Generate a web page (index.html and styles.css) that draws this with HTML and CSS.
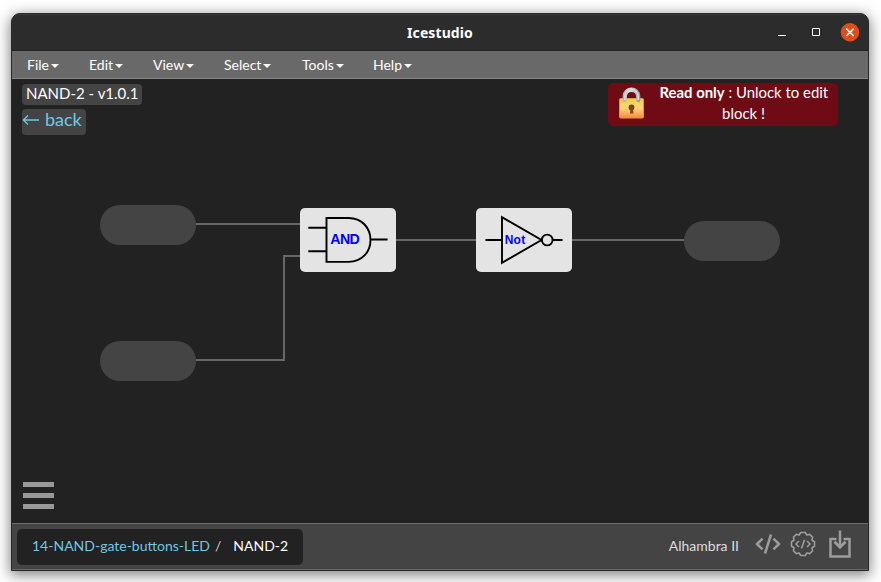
FILE: index.html
```html
<!DOCTYPE html>
<html lang="en">
<head>
<meta charset="utf-8">
<title>Icestudio</title>
<link rel="stylesheet" href="styles.css">
</head>
<body>
<div class="window">
  <header class="titlebar">
    <h1 class="title">Icestudio</h1>
    <div class="controls">
      <svg width="8" height="20" viewBox="0 0 8 20"><path d="M0 12.5h8" stroke="#fff" fill="none"/></svg>
      <svg width="8" height="20" viewBox="0 0 8 20"><path d="M.5 6.5h7v7h-7z" stroke="#fff" fill="none"/></svg>
      <svg width="20" height="20" viewBox="0 0 20 20"><circle cx="10" cy="9.3" r="9.2" fill="#e04c1a"/><path d="M6.3 5.6l7.4 7.4M13.7 5.6l-7.4 7.4" stroke="#fff" stroke-width="1.5"/></svg>
    </div>
  </header>
  <nav class="menubar">
    <span class="menu file">File<i class="caret"></i></span>
    <span class="menu edit">Edit<i class="caret"></i></span>
    <span class="menu view">View<i class="caret"></i></span>
    <span class="menu select">Select<i class="caret"></i></span>
    <span class="menu tools">Tools<i class="caret"></i></span>
    <span class="menu help">Help<i class="caret"></i></span>
  </nav>
  <main class="canvas">
    <svg class="graph" width="856" height="444" viewBox="12 79 856 444">
      <g fill="none" stroke="#666" stroke-width="2">
        <path d="M196 224H300M196 360H284V256H300M396 240H476M572 240H684"/>
      </g>
      <g fill="#444">
        <rect x="100" y="205" width="96" height="40" rx="20"/>
        <rect x="100" y="341" width="96" height="40" rx="20"/>
        <rect x="684" y="221" width="96" height="40" rx="20"/>
      </g>
      <g fill="#e4e4e4">
        <rect x="300" y="208" width="96" height="64" rx="5"/>
        <rect x="476" y="208" width="96" height="64" rx="5"/>
      </g>
      <g fill="none" stroke="#000" stroke-width="1.9">
        <path d="M308.3 227.8H326.5M308.3 251.3H326.5M370.5 239.5H387.6M326.5 218H348.5C362 218 370.5 228 370.5 240S362 261.9 348.5 261.9H326.5Z"/>
        <path d="M485.4 240H502M502 217.2V262.8L541.5 240ZM553 240H562.6"/>
        <circle cx="547.2" cy="240" r="5.4"/>
      </g>
      <text class="gate" x="330.3" y="244.4" font-size="14.2" textLength="29.5">AND</text>
      <text class="gate" x="504.7" y="244" font-size="12" textLength="20.5">Not</text>
    </svg>
    <div class="block-info">
      <span class="version">NAND-2 - v1.0.1</span>
      <span class="back"><svg width="17" height="12" viewBox="0 0 17 12"><path d="M17 6H1.5M6 1.5L1.4 6L6 10.5" fill="none" stroke="#70c8e4" stroke-width="1.35"/></svg>back</span>
    </div>
    <div class="notice">
      <svg class="lock" width="28" height="34" viewBox="0 0 28 34">
        <defs>
          <linearGradient id="gold" x1="0" y1="0" x2="0" y2="1"><stop offset="0" stop-color="#f5cd46"/><stop offset=".5" stop-color="#ffd575"/><stop offset="1" stop-color="#fa8746"/></linearGradient>
          <linearGradient id="steel"><stop offset="0" stop-color="#b2b5b7"/><stop offset=".4" stop-color="#e0e2e3"/><stop offset="1" stop-color="#999d9f"/></linearGradient>
        </defs>
        <rect x="1.5" y="11.5" width="24" height="19.5" rx="1.2" fill="url(#gold)" stroke="#e69a38"/>
        <path d="M6.8 13V9.5C6.8 .5 20.2 .5 20.2 9.5V13" fill="none" stroke="url(#steel)" stroke-width="4.4" stroke-linecap="round"/>
        <path d="M6.8 13V9.5C6.8 .5 20.2 .5 20.2 9.5V13" fill="none" stroke="#d7dadb" stroke-width="1.6"/>
        <circle cx="13.5" cy="20.5" r="2.9" fill="#6c4518"/><path d="M12.3 20.5h2.6l.6 6h-3.4z" fill="#7b4e1c"/>
      </svg>
      <p class="notice-text"><b>Read only</b> : Unlock to edit<br>block !</p>
    </div>
    <div class="burger"><i></i><i></i><i></i></div>
  </main>
  <footer class="footer">
    <div class="crumbs"><span class="parent">14-NAND-gate-buttons-LED</span><span class="slash">/</span><span class="current">NAND-2</span></div>
    <div class="tools">
      <span class="board">Alhambra II</span>
      <svg class="code" width="26" height="22" viewBox="0 0 26 22" fill="none" stroke="#9c9c9c" stroke-width="2.5"><path d="M7.5 5.7L2 11L7.5 16.3M18.5 5.7L24 11L18.5 16.3M16 1.5L10 20.5"/></svg>
      <svg class="gear" width="26" height="26" viewBox="0 0 26 26" fill="none" stroke="#9c9c9c" stroke-width="1.6" stroke-linejoin="round"><path d="M10.7 1.5H15.3L16.8 4L19.7 3.4L22.6 6.3L22 9.2L24.5 10.7V15.3L22 16.8L22.6 19.7L19.7 22.6L16.8 22L15.3 24.5H10.7L9.2 22L6.3 22.6L3.4 19.7L4 16.8L1.5 15.3V10.7L4 9.2L3.4 6.3L6.3 3.4L9.2 4Z"/><path d="M9 10L5.9 13L9 16M17 10L20.1 13L17 16M14.5 8.8L11.5 17.5"/></svg>
      <svg class="load" width="22" height="29" viewBox="0 0 22 29" fill="none" stroke="#9c9c9c" stroke-width="2.5"><path d="M7.5 9H1.5V26.5H20.5V9H14.5M11 .5V17"/><path d="M5.5 11.8L11 17.3L16.5 11.8" stroke-width="2.8"/></svg>
    </div>
  </footer>
</div>
</body>
</html>
```
FILE: styles.css
```css
* { box-sizing: border-box; }
body { margin: 0; height: 582px; padding: 13px 12px 11px 11px; overflow: hidden; background: #fff; font-family: Lato, sans-serif; color: #fff; }
.window { width: 858px; height: 558px; display: flex; flex-direction: column; border: 1px solid #292929; border-radius: 9px 9px 0 0; background: #222; overflow: hidden; box-shadow: 0 3px 14px 1px rgba(0,0,0,.5); }
.titlebar { height: 37px; flex: none; display: grid; grid-template-columns: 1fr auto 1fr; align-items: center; background: #2c2c2c; border-top: 1px solid #3b3b3b; border-bottom: 1px solid #252525; }
.title { grid-column: 2; margin: 0; font: bold 14px/20px "Noto Sans", sans-serif; letter-spacing: .1px; }
.controls { justify-self: end; display: flex; align-items: center; gap: 26px; padding-right: 8px; }
.controls svg:nth-child(2) { margin-top: -1px; }
.controls svg:last-child { margin-left: -6px; }
.menubar { height: 28px; flex: none; display: flex; background: #696969; border-bottom: 1px solid #858585; font-size: 14px; line-height: 28px; }
.menu { display: flex; align-items: center; padding-left: 15px; }
.file { width: 62px; }
.edit { width: 64px; }
.view { width: 71px; }
.select { width: 78px; }
.menubar .tools { width: 71px; }
.caret { margin-left: 2px; margin-top: 2px; border: 4px solid transparent; border-top-color: #fff; border-bottom: 0; }
.canvas { flex: 1; position: relative; display: flex; justify-content: space-between; align-items: flex-start; padding: 4px 30px 0 10px; }
.graph { position: absolute; left: 0; top: 0; }
.gate { font-family: "Liberation Sans", Arial, sans-serif; font-weight: bold; fill: #00f; }
.block-info { position: relative; display: flex; flex-direction: column; align-items: flex-start; gap: 4px; }
.version, .back { background: #444; border-radius: 4px; }
.version { width: 120px; height: 21px; margin-top: 1px; padding: 0 4px; font-size: 15px; line-height: 19px; white-space: nowrap; }
.back { width: 64px; height: 26px; display: flex; align-items: center; gap: 6px; padding: 0 0 6px 0; font-size: 18px; line-height: 20px; color: #70c8e4; }
.back svg { margin-top: 2px; }
.notice { position: relative; width: 230px; height: 43px; display: flex; gap: 14px; padding-left: 10px; background: #6e0b14; border-radius: 5px; }
.lock { margin: 4px 0 0 -.5px; }
.notice-text { margin: -1px 0 0; width: 168px; font-size: 14.9px; line-height: 21px; text-align: center; white-space: nowrap; }
.burger { position: absolute; left: 11px; bottom: 14px; display: flex; flex-direction: column; gap: 6px; }
.burger i { width: 31px; height: 5px; background: #999; }
.footer { height: 47px; flex: none; display: flex; justify-content: space-between; align-items: center; padding: 0 17px 0 5px; background: #444; border-top: 1px solid #6b6b6b; border-bottom: 1px solid #666; font-size: 14px; }
.crumbs { width: 286px; height: 36px; display: flex; align-items: center; padding: 0 15px 2px; background: #222; border-radius: 5px; white-space: nowrap; }
.parent { color: #70c8e4; }
.slash { margin: 0 12px 0 5px; color: #ccc; }
.footer .tools { display: flex; align-items: center; color: #ddd; }
.board { margin-top: -2px; }
.code { margin: -5px 0 0 16px; }
.gear { margin: -5px 0 0 9px; }
.load { margin: -5px 0 0 13px; }
```
